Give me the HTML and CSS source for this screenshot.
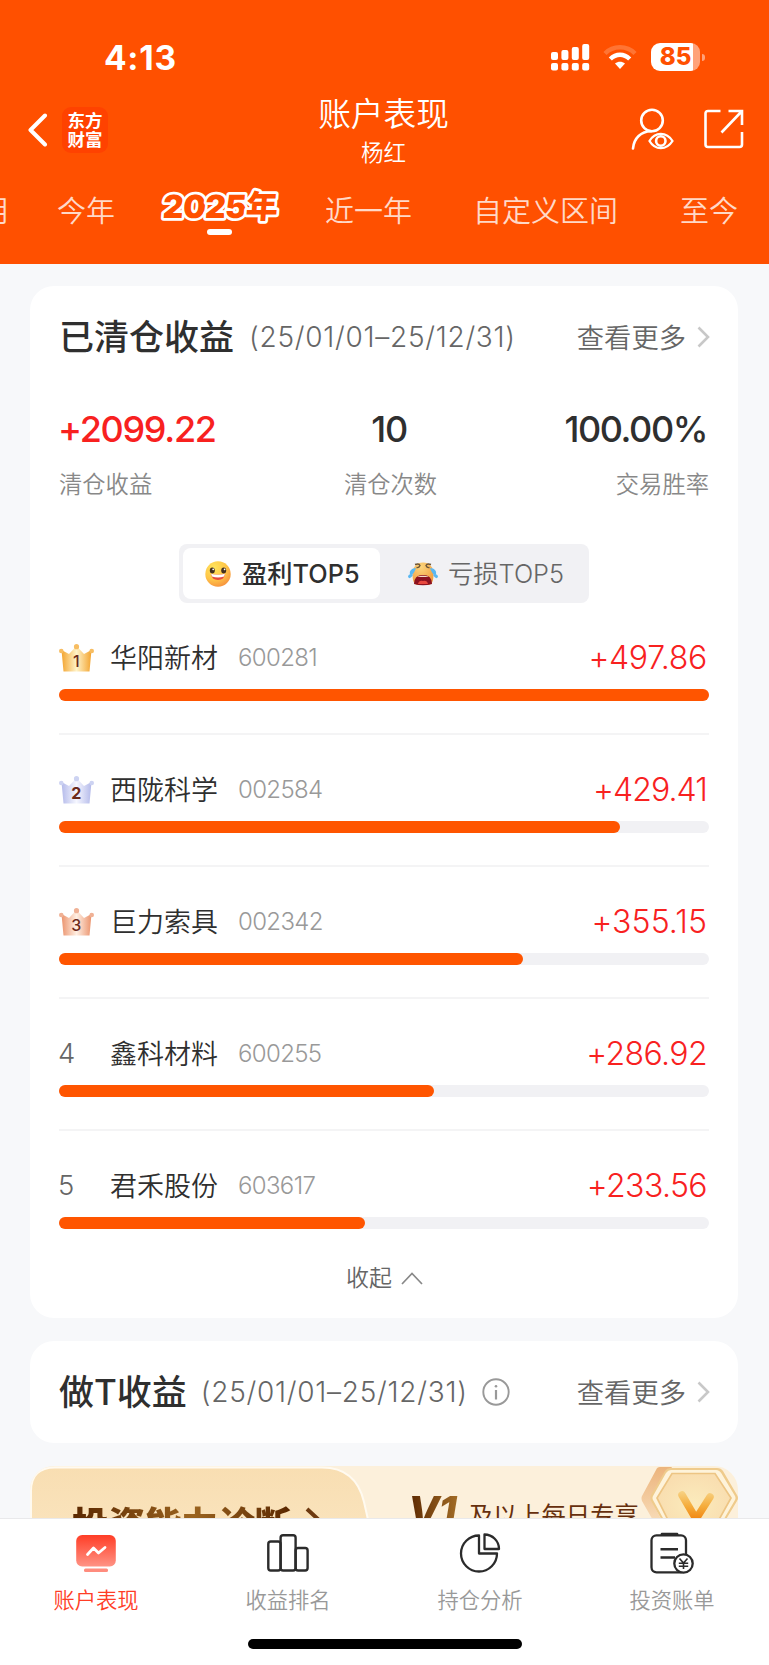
FILE: index.html
```html
<!DOCTYPE html>
<html lang="zh-CN">
<head>
<meta charset="utf-8">
<title>账户表现</title>
<link rel="stylesheet" href="styles.css">
</head>
<body>
<div class="page">
  <header class="header">
    <div class="status">
      <span class="time">4:13</span>
      <div class="status-icons">
        <svg width="39" height="28" viewBox="0 0 39 28" fill="#fff">
          <rect x="0" y="9" width="7" height="8" rx="2"/><rect x="10.400" y="7" width="7" height="10" rx="2"/><rect x="20.800" y="4" width="7" height="13" rx="2"/><rect x="31.200" y="1" width="7" height="16" rx="2"/>
          <rect x="0" y="20" width="7" height="7.500" rx="2"/><rect x="10.400" y="20" width="7" height="7.500" rx="2"/><rect x="20.800" y="20" width="7" height="7.500" rx="2"/><rect x="31.200" y="20" width="7" height="7.500" rx="2"/>
        </svg>
        <svg class="wifi" width="34" height="26" viewBox="0 0 34 26" fill="none">
          <path d="M2 9.500C10 1.200 24 1.200 32 9.500" stroke="#ff7433" stroke-width="4.400"/>
          <path d="M7.300 15C13 9.300 21 9.300 26.700 15" stroke="#fff" stroke-width="4.400"/>
          <path d="M12 19.600C15 17 19 17 22 19.600L17 25Z" fill="#fff"/>
        </svg>
        <div class="battery"><span class="level">85</span><i class="cap"></i></div>
      </div>
    </div>
    <div class="nav">
      <div class="nav-left">
        <svg width="20" height="34" viewBox="0 0 20 34" fill="none" stroke="#fff" stroke-width="4" stroke-linecap="round" stroke-linejoin="round"><path d="M17 2.500L2.500 17L17 31.500"/></svg>
        <div class="logo"><span>东方</span><span>财富</span></div>
      </div>
      <div class="nav-title"><h1>账户表现</h1><p>杨红</p></div>
      <div class="nav-right">
        <svg width="43" height="42" viewBox="0 0 43 42" fill="none" stroke="#fff" stroke-width="2.600" stroke-linecap="round">
          <circle cx="21" cy="12.500" r="10.800"/><path d="M2 40.500C3 30 10 23.500 20 23.300"/>
          <path d="M18.500 33C24 23.500 35.500 23.500 41.500 33C35.500 42.500 24 42.500 18.500 33Z" stroke-width="2.300"/><circle cx="29.800" cy="33" r="4.700"/>
        </svg>
        <svg width="40" height="40" viewBox="0 0 40 40" fill="none" stroke="#fff" stroke-width="2.600">
          <path d="M16.500 2H4Q1.500 2 1.500 4.500V35.500Q1.500 38 4 38H35.500Q38 38 38 35.500V23"/><path d="M24.500 2H38V16M38 2L17.500 23.500"/>
        </svg>
      </div>
    </div>
    <nav class="ranges">
      <span class="r0">月</span><span>今年</span><span class="on"><svg width="88" height="40" viewBox="0 0 88 40"><text x="46" y="31.500" textLength="115" transform="skewX(-4)">2025年</text></svg></span><span>近一年</span><span>自定义区间</span><span class="last">至今</span>
    </nav>
  </header>

  <main class="main">
    <section class="card cleared">
      <div class="head">
        <h2>已清仓收益</h2><span class="date">(25/01/01–25/12/31)</span>
        <a class="more"><span>查看更多</span><svg width="13" height="22" viewBox="0 0 13 22" fill="none" stroke="#c8c8c8" stroke-width="2.600"><path d="M1.500 1.500L11 11L1.500 20.500"/></svg></a>
      </div>
      <div class="stats">
        <div><b class="red">+2099.22</b><span>清仓收益</span></div>
        <div class="mid"><b>10</b><span>清仓次数</span></div>
        <div class="right"><b>100.00%</b><span>交易胜率</span></div>
      </div>
      <div class="seg">
        <div class="seg-item active">
          <svg width="26" height="26" viewBox="0 0 26 26">
            <defs><radialGradient id="smile" cx=".35" cy=".25" r=".85"><stop offset="0" stop-color="#ffe45c"/><stop offset=".55" stop-color="#ffc648"/><stop offset="1" stop-color="#f58a3c"/></radialGradient></defs>
            <circle cx="13" cy="13" r="12.700" fill="url(#smile)"/><ellipse cx="7.300" cy="9.500" rx="2.500" ry="3" fill="#44301f"/><ellipse cx="18.700" cy="9.500" rx="2.500" ry="3" fill="#44301f"/><circle cx="8.200" cy="8.300" r=".9" fill="#fff"/><circle cx="19.600" cy="8.300" r=".9" fill="#fff"/>
            <path d="M6 12.800Q13 14.800 20 12.800Q19.500 19 13 19Q6.500 19 6 12.800Z" fill="#e84a3c"/><path d="M6 12.800Q13 14.800 20 12.800L19 15.600Q13 17.300 7 15.600Z" fill="#fff"/>
          </svg><span>盈利TOP5</span>
        </div>
        <div class="seg-item">
          <svg width="30" height="24" viewBox="0 0 30 24">
            <defs><radialGradient id="cry" cx=".4" cy=".2" r=".9"><stop offset="0" stop-color="#fbd57c"/><stop offset="1" stop-color="#f09436"/></radialGradient></defs>
            <path d="M15 0.500C22 .5 25 5 25.500 12C25.500 19 24 22 21 23H9C6 22 4.500 19 4.500 12C5 5 8 .5 15 .5Z" fill="url(#cry)"/>
            <path d="M7 2.500Q11 1 12 3.500Q11 6 8.500 5.500M23 2.500Q19 1 18 3.500Q19 6 21.500 5.500" stroke="#6b5438" stroke-width="1.400" fill="none"/>
            <path d="M6 22Q6 13 15 13T24 22Q15 24.500 6 22Z" fill="#8c1220"/><path d="M10 14.400Q15 13 20 14.400V15H10Z" fill="#f5dccb"/><path d="M10 22Q11 18 15 19Q19 18 20 22Z" fill="#e8483e"/>
            <path d="M8 6C4 6 1 9 2 12Q5 14.500 8 6ZM4 12Q0 12 0 15Q2 18 5 13ZM22 6C26 6 29 9 28 12Q25 14.500 22 6ZM26 12Q30 12 30 15Q28 18 25 13Z" fill="#5ab8f2"/>
          </svg><span>亏损TOP5</span>
        </div>
      </div>
      <ol class="rank">
        <li><div class="row"><span class="no"><svg class="crown" viewBox="0 0 36 28"><defs><linearGradient id="gold"><stop offset="0" stop-color="#f3a42f"/><stop offset=".5" stop-color="#fff3c8"/><stop offset="1" stop-color="#f3a42f"/></linearGradient></defs><path d="M2.500 6L10 10L17.500 2L25 10L32.500 6L30.500 27.500H4.500Z" fill="url(#gold)"/><g fill="#f7bd62"><circle cx="2.300" cy="7" r="2.300"/><circle cx="17.500" cy="2.700" r="2.600"/><circle cx="32.700" cy="7" r="2.300"/></g><text x="17.300" y="22.800" class="n1">1</text></svg></span><span class="name">华阳新材</span><span class="code">600281</span><span class="val">+497.86</span></div><div class="bar"><i style="width:100%"></i></div></li>
        <li><div class="row"><span class="no"><svg class="crown" viewBox="0 0 36 28"><defs><linearGradient id="silver"><stop offset="0" stop-color="#b4baea"/><stop offset=".5" stop-color="#f6f7ff"/><stop offset="1" stop-color="#b4baea"/></linearGradient></defs><path d="M2.500 6L10 10L17.500 2L25 10L32.500 6L30.500 27.500H4.500Z" fill="url(#silver)"/><g fill="#cdd3f2"><circle cx="2.300" cy="7" r="2.300"/><circle cx="17.500" cy="2.700" r="2.600"/><circle cx="32.700" cy="7" r="2.300"/></g><text x="17.300" y="22.800" class="n2">2</text></svg></span><span class="name">西陇科学</span><span class="code">002584</span><span class="val tight">+429.41</span></div><div class="bar"><i style="width:86.3%"></i></div></li>
        <li><div class="row"><span class="no"><svg class="crown" viewBox="0 0 36 28"><defs><linearGradient id="bronze"><stop offset="0" stop-color="#eb936d"/><stop offset=".5" stop-color="#fff0e4"/><stop offset="1" stop-color="#eb936d"/></linearGradient></defs><path d="M2.500 6L10 10L17.500 2L25 10L32.500 6L30.500 27.500H4.500Z" fill="url(#bronze)"/><g fill="#f0b195"><circle cx="2.300" cy="7" r="2.300"/><circle cx="17.500" cy="2.700" r="2.600"/><circle cx="32.700" cy="7" r="2.300"/></g><text x="17.300" y="22.800" class="n3">3</text></svg></span><span class="name">巨力索具</span><span class="code">002342</span><span class="val wide">+355.15</span></div><div class="bar"><i style="width:71.4%"></i></div></li>
        <li><div class="row"><span class="no">4</span><span class="name">鑫科材料</span><span class="code">600255</span><span class="val snug">+286.92</span></div><div class="bar"><i style="width:57.7%"></i></div></li>
        <li><div class="row"><span class="no">5</span><span class="name">君禾股份</span><span class="code">603617</span><span class="val snug">+233.56</span></div><div class="bar"><i style="width:47%"></i></div></li>
      </ol>
      <div class="fold">收起<svg width="22" height="13" viewBox="0 0 22 13" fill="none" stroke="#888" stroke-width="1.700"><path d="M1 12L11 1.500L21 12"/></svg></div>
    </section>

    <section class="card tcard">
      <div class="head">
        <h2>做T收益</h2><span class="date">(25/01/01–25/12/31)</span>
        <svg class="info" width="28" height="28" viewBox="0 0 28 28" fill="none" stroke="#999" stroke-width="1.900"><circle cx="14" cy="14" r="12.700"/><path d="M14 12V21.500" stroke-width="2.200"/><circle cx="14" cy="8.300" r="1.300" fill="#999" stroke="none"/></svg>
        <a class="more"><span>查看更多</span><svg width="13" height="22" viewBox="0 0 13 22" fill="none" stroke="#c8c8c8" stroke-width="2.600"><path d="M1.500 1.500L11 11L1.500 20.500"/></svg></a>
      </div>
    </section>

    <section class="promo">
      <svg class="promo-bg" width="708" height="120" viewBox="0 0 708 120">
        <defs>
          <linearGradient id="tab" x2="0" y2="1"><stop offset="0" stop-color="#f8deb2"/><stop offset="1" stop-color="#fce8c6"/></linearGradient>
          <linearGradient id="side" x2="0" y2="1"><stop offset="0" stop-color="#ecb47c"/><stop offset="1" stop-color="#fbe6c8"/></linearGradient>
          <radialGradient id="face"><stop offset="0" stop-color="#fbebbc"/><stop offset="1" stop-color="#f9deb0"/></radialGradient>
          <linearGradient id="vee" gradientUnits="userSpaceOnUse" x1="0" y1="26" x2="0" y2="54"><stop offset="0" stop-color="#f7d080"/><stop offset=".5" stop-color="#f5ad3c"/><stop offset="1" stop-color="#f08410"/></linearGradient>
        </defs>
        <path d="M1 120V25Q1 1.500 25 1.500H292Q326 1.500 334 36L344 80V120Z" fill="url(#tab)" stroke="#fffaf0" stroke-width="2"/>
        <path d="M630 1H642L621 34L640 70H632L612 35Q611 32 612 30L626 4Q627 1 630 1Z" fill="url(#side)"/>
        <path d="M640 2H687Q691 2 693 5L707 29Q709 32 707 35L686 70H641L621 35Q620 32 621 29L635 5Q637 2 640 2Z" fill="#efcb8c"/>
        <path d="M641 4H686Q689.500 4 691.500 7.500L705 30Q706 32 705 34L684 70H643L623 34Q622 32 623 30L636 7Q638 4 641 4Z" fill="#fef3da"/>
        <path d="M642 7.500H685L701 32L681 68H645L627 32Z" fill="url(#face)" stroke="#edc584" stroke-width="1.700"/>
        <path d="M652 29L666 53L680 31" fill="none" stroke="url(#vee)" stroke-width="7.500" stroke-linecap="round" stroke-linejoin="round"/>
      </svg>
      <div class="promo-left"><b>投资能力诊断</b><svg width="18" height="30" viewBox="0 0 18 30" fill="none" stroke="#6e3a10" stroke-width="4"><path d="M2 2L15 14L2 26"/></svg></div>
      <div class="promo-right"><b>V1</b><span>及以上每日专享</span></div>
    </section>
  </main>

  <footer class="tabbar">
    <div class="tabs">
      <div class="tab current">
        <svg width="44" height="44" viewBox="0 0 44 44" fill="none"><defs><linearGradient id="scr" x2="0" y2="1"><stop offset="0" stop-color="#ff3d26"/><stop offset="1" stop-color="#ff9385"/></linearGradient></defs><rect x="2.200" y="4" width="39.600" height="31.500" rx="6" fill="url(#scr)"/><path d="M13.500 23.500L19.500 17L24.500 22L31 16.500" stroke="#fff" stroke-width="2.800" stroke-linecap="round" stroke-linejoin="round"/><rect x="10" y="37.500" width="24" height="3.400" rx="1.500" fill="#ff8c7e"/></svg>
        <span>账户表现</span>
      </div>
      <div class="tab">
        <svg width="44" height="44" viewBox="0 0 44 44" fill="none" stroke="#2b2b2b" stroke-width="2.400"><rect x="2.300" y="10.500" width="12.300" height="29" rx="2.500"/><rect x="14.600" y="4.300" width="15" height="35.200" rx="2.500"/><rect x="29.600" y="17" width="12" height="22.500" rx="2.500"/></svg>
        <span>收益排名</span>
      </div>
      <div class="tab">
        <svg width="44" height="44" viewBox="0 0 44 44" fill="none" stroke="#2b2b2b" stroke-width="2.300" stroke-linejoin="round"><path d="M21 4.500A18 18 0 1 0 39 22.500H21Z"/><path d="M26.500 3.500V18H41A14.500 14.500 0 0 0 26.500 3.500Z"/></svg>
        <span>持仓分析</span>
      </div>
      <div class="tab">
        <svg width="44" height="44" viewBox="0 0 44 44" fill="none" stroke="#2b2b2b" stroke-width="2.300"><rect x="1.500" y="4.300" width="34.500" height="37" rx="5"/><path d="M12 3.200H27" stroke-width="2.800" stroke-linecap="round"/><path d="M10.500 18.300H28M10.500 26.500H25" stroke-width="2.500"/><circle cx="33.500" cy="32.500" r="9.200" fill="#fff"/><path d="M29.500 27.500L33.500 32L37.500 27.500M33.500 32V38M28.800 32.300H38.200M28.800 35.300H38.200" stroke-width="1.600"/></svg>
        <span>投资账单</span>
      </div>
    </div>
    <div class="home"></div>
  </footer>
</div>
</body>
</html>
```
FILE: styles.css
```css
* { box-sizing: border-box; margin: 0; padding: 0; }
body { background: #f7f8fa; font-family: Inter, "Noto Sans CJK SC", sans-serif; font-weight: 350; color: #2f2f2f; }
svg { display: block; flex: none; }
i { display: block; font-style: normal; }
.page { width: 769px; height: 1665px; display: flex; flex-direction: column; overflow: hidden; }

.header { height: 264px; flex: none; background: #ff5000; color: #fff; overflow: hidden; }
.status { height: 90px; padding: 25px 69px 0 104px; display: flex; justify-content: space-between; align-items: center; }
.time { font-size: 33.500px; font-weight: 750; line-height: 40px; letter-spacing: .7px; }
.status-icons { display: flex; align-items: center; padding-bottom: 1px; }
.wifi { margin: 0 14px 0 13px; }
.battery { position: relative; width: 49px; height: 28px; border-radius: 9px; background: linear-gradient(90deg, #fff 42px, #ffa27a 42px); }
.level { display: block; width: 49px; text-align: center; font-size: 24px; line-height: 28px; font-weight: 800; color: #ff5000; }
.cap { position: absolute; left: 51px; top: 11px; width: 3px; height: 7px; border-radius: 0 3px 3px 0; background: #ffa27a; }

.nav { height: 80px; display: grid; grid-template-columns: 1fr 200px 1fr; }
.nav-left { display: flex; align-items: center; padding-left: 28px; gap: 14px; }
.logo { width: 46px; height: 46px; border-radius: 9px; background: #ff4200; display: flex; flex-direction: column; align-items: center; justify-content: center; font-size: 17.500px; font-weight: 700; line-height: 19.500px; }
.nav-title { text-align: center; padding: 1px 2px 0 0; }
.nav-title h1 { font-size: 32.700px; font-weight: 350; line-height: 46px; }
.nav-title p { font-size: 22.500px; line-height: 32px; }
.nav-right { display: flex; align-items: center; justify-content: flex-end; padding: 0 25px 2px 0; gap: 30px; }
.ranges { display: flex; gap: 61px; margin-left: -18px; padding-top: 21px; font-size: 29px; line-height: 42px; white-space: nowrap; color: #ffd9c8; }
.r0 { margin-right: -15px; }
.last { margin-left: 1px; }
.on { position: relative; width: 88px; }
.on svg { margin-top: -4px; overflow: visible; }
.on text { font-size: 32px; font-weight: 900; text-anchor: middle; fill: #ff5000; stroke: #fff; stroke-width: 5.500px; stroke-linejoin: round; paint-order: stroke fill; }
.on::after { content: ""; position: absolute; left: 31px; top: 38px; width: 25px; height: 6px; border-radius: 3px; background: #fff; }

.main { flex: 1; min-height: 0; overflow: hidden; padding: 22px 31px 0 30px; display: flex; flex-direction: column; gap: 23px; }
.card { flex: none; background: #fff; border-radius: 24px; padding: 0 29px; }
.cleared { height: 1032px; }
.tcard { height: 102px; }
.head { height: 102px; display: flex; align-items: center; white-space: nowrap; }
h2 { font-size: 35px; line-height: 50px; font-weight: 500; }
.date { font-size: 28px; font-weight: 300; margin-left: 15px; letter-spacing: .73px; color: #666; }
.tcard .date { margin-left: 14px; }
.more { margin: 0 -1px 0 auto; display: flex; align-items: center; gap: 11px; font-size: 27.300px; color: #666; }
.more span { padding-bottom: 3px; }
.info { margin-left: 14px; }
.stats { height: 156px; display: flex; justify-content: space-between; }
.stats div { display: flex; flex-direction: column; padding-top: 17px; }
.stats b { font-size: 36px; line-height: 48px; font-weight: 500; letter-spacing: -1.300px; margin-left: -1px; }
.stats span { font-size: 23.300px; line-height: 36px; margin-top: 14px; color: #888; }
.stats .mid { align-items: center; }
.stats .mid b { margin-left: -3px; }
.stats .right { align-items: flex-end; }
.stats .right b { letter-spacing: -1.450px; padding-right: 2px; }
.red { color: #f8211f; }
.seg { width: 410px; height: 59px; margin: 0 auto; padding: 4px; border-radius: 8px; background: #f1f1f4; display: flex; }
.seg-item { flex: 1; display: flex; align-items: center; padding-left: 28px; gap: 10px; font-size: 25.300px; color: #666; white-space: nowrap; }
.seg-item span { padding-bottom: 4px; }
.seg-item.active { flex: none; width: 197px; padding-left: 22px; gap: 11px; background: #fff; border-radius: 8px; color: #2f2f2f; font-weight: 450; }
.rank { list-style: none; padding-top: 30px; }
.rank li { height: 132px; }
.rank li:last-child { height: 99px; }
.row { height: 48px; display: flex; align-items: center; margin-bottom: 8px; }
.no { width: 52px; font-size: 27.500px; color: #666; margin-left: -1px; }
.crown { width: 36px; height: 28px; margin: 2px 0 0 1px; }
.crown text { font-size: 16px; text-anchor: middle; fill: #6b2a1c; font-weight: 450; }
.crown .n2 { font-weight: 700; }
.name { font-size: 27px; width: 128px; font-weight: 350; padding-bottom: 2px; }
.code { font-size: 24px; color: #999; letter-spacing: -.65px; font-weight: 350; }
.val { margin-left: auto; font-size: 32px; font-weight: 330; color: #f8211f; padding-right: 2px; letter-spacing: -.3px; }
.val.tight { letter-spacing: -.9px; }
.val.snug { letter-spacing: -.6px; }
.val.wide { letter-spacing: .1px; }
.bar { height: 12px; border-radius: 6px; background: #f1f1f4; }
.bar i { height: 12px; border-radius: 6px; background: #ff5500; }
.rank li:not(:last-child) .bar { margin-bottom: 32px; }
.rank li:not(:last-child)::after { content: ""; display: block; height: 2px; background: #f4f4f5; }
.fold { display: flex; justify-content: center; align-items: center; gap: 9px; font-size: 23px; line-height: 34px; padding: 1px 0 0 1px; color: #666; }

.promo { flex: none; position: relative; height: 120px; border-radius: 24px; background: #fcf0db; overflow: hidden; display: flex; }
.promo-bg { position: absolute; left: 0; top: 0; }
.promo-left, .promo-right { position: relative; display: flex; align-items: flex-start; }
.promo-left { width: 378px; padding: 33px 0 0 42px; gap: 14px; }
.promo-left b { font-size: 36.500px; font-weight: 900; line-height: 52px; background: linear-gradient(90deg, #5a2700, #9b6420 55%, #5a2700); -webkit-background-clip: text; color: transparent; }
.promo-left svg { margin-top: 8px; }
.promo-right { padding-top: 20px; gap: 13px; }
.promo-right b { font-size: 41px; line-height: 50px; font-weight: 800; font-style: italic; padding-right: 2px; margin-right: -2px; letter-spacing: -1px; background: linear-gradient(90deg, #5a2700, #a26c26); -webkit-background-clip: text; color: transparent; }
.promo-right span { font-size: 24.300px; line-height: 34px; margin-top: 12px; color: #662f0d; font-weight: 400; }

.tabbar { height: 147px; flex: none; background: #fff; border-top: 1px solid #e9e9eb; }
.tabs { display: grid; grid-template-columns: repeat(4, 192px); height: 120px; }
.tab { display: flex; flex-direction: column; align-items: center; padding-top: 12px; font-size: 21.300px; line-height: 32px; color: #999; }
.tab span { margin-top: 9px; }
.current { color: #ff3d26; }
.home { width: 274px; height: 10px; border-radius: 5px; background: #000; margin: 0 0 0 247.500px; }
```
